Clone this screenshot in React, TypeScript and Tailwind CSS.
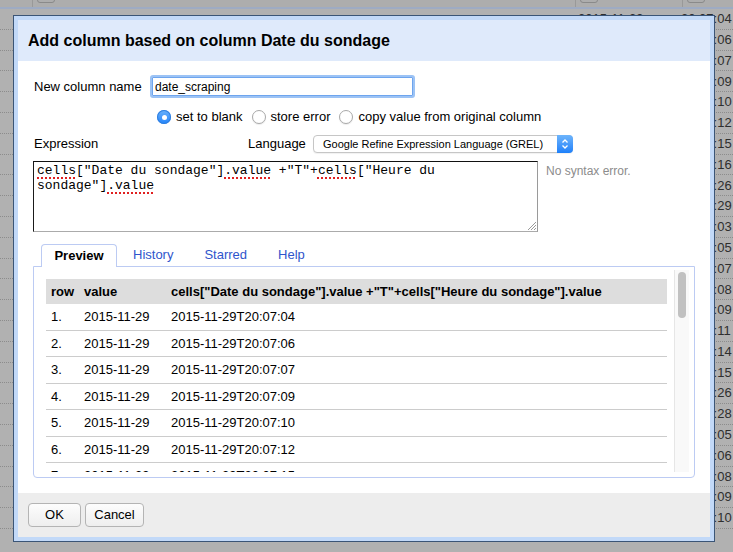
const bgRows = [
  "04", "06", "07", "09", "10", "12", "15", "16", "26", "29", "03", "05", "07",
  "08", "09", "11", "14", "15", "26", "28", "05", "06", "08", "09", "10",
];

const preview = [
  ["1.", "2015-11-29", "2015-11-29T20:07:04"],
  ["2.", "2015-11-29", "2015-11-29T20:07:06"],
  ["3.", "2015-11-29", "2015-11-29T20:07:07"],
  ["4.", "2015-11-29", "2015-11-29T20:07:09"],
  ["5.", "2015-11-29", "2015-11-29T20:07:10"],
  ["6.", "2015-11-29", "2015-11-29T20:07:12"],
  ["7.", "2015-11-29", "2015-11-29T20:07:15"],
];

function Radio({ checked, label }: { checked?: boolean; label: string }) {
  return (
    <label className="flex items-center gap-[5px]">
      {checked ? (
        <span className="flex h-[14px] w-[14px] items-center justify-center rounded-full bg-gradient-to-b from-[#69b1fa] to-[#1f84fb] shadow-[inset_0_0_0_1px_#2f7fe0]">
          <span className="h-[5px] w-[5px] rounded-full bg-white" />
        </span>
      ) : (
        <span className="h-[14px] w-[14px] rounded-full border border-[#a9a9a9] bg-white shadow-[0_1px_1px_rgba(0,0,0,0.08)]" />
      )}
      <span>{label}</span>
    </label>
  );
}

const spell = "underline decoration-dotted decoration-[#e02020] decoration-2 underline-offset-[3px]";

export default function App() {
  return (
    <div className="relative h-[552px] w-[733px] overflow-hidden bg-[#b1b1b1] font-['Liberation_Sans',Arial,sans-serif] text-black">
      {/* grid behind the dialog */}
      <div className="flex h-[9px] border-b-2 border-[#9eabc3] bg-[#adadad]">
        <div className="w-[33px] border-r border-[#999]" />
        <div className="w-[543px] border-r border-[#999] pl-[4px]">
          <div className="mt-[-9px] h-[12px] w-[18px] rounded-[3px] border border-[#8a8a8a]" />
        </div>
        <div className="w-[107px] border-r border-[#999] pl-[4px]">
          <div className="mt-[-9px] h-[12px] w-[18px] rounded-[3px] border border-[#8a8a8a]" />
        </div>
        <div className="flex-1 pl-[4px]">
          <div className="mt-[-9px] h-[12px] w-[18px] rounded-[3px] border border-[#8a8a8a]" />
        </div>
      </div>
      {bgRows.map((s, i) => (
        <div key={i} className="flex h-[20.8px] items-center border-b border-dotted border-[#8c8c8c] text-[13px] text-[#2e2e2e]">
          <div className="w-[578px]" />
          <div className="w-[103px]">{i === 0 ? "2015-11-29" : ""}</div>
          <div className="flex-1">20:07:{s}</div>
        </div>
      ))}

      {/* dialog */}
      <div className="absolute left-[13px] top-[15px] h-[527px] w-[702px] border border-[#3b5576] bg-[#c2d9f8] p-[4px]">
        <div className="flex h-full flex-col bg-white">
          <div className="flex h-[41px] items-center bg-[#dfeafb] pl-[10px] text-[16px] font-bold">
            Add column based on column Date du sondage
          </div>

          <div className="flex flex-1 flex-col px-[15px] text-[13px]">
            <div className="mt-[14px] flex h-[23px] items-center">
              <span className="w-[117px] pl-[1px]">New column name</span>
              <div className="flex h-[23px] w-[265px] items-center rounded-[3px] border-2 border-[#9cc3f5] pl-[3px] text-[12px] shadow-[inset_0_0_0_1px_#6ea5ee]">
                date_scraping
              </div>
            </div>

            <div className="mt-[11px] flex h-[16px] items-center gap-[9px] pl-[124px]">
              <Radio checked label="set to blank" />
              <Radio label="store error" />
              <Radio label="copy value from original column" />
            </div>

            <div className="mt-[10px] flex h-[18px] items-center">
              <span className="w-[215px] pl-[1px]">Expression</span>
              <span className="w-[65px]">Language</span>
              <div className="flex h-[18px] w-[260px] items-center justify-between rounded-[4px] border border-[#c6c6c6] bg-white text-[11px] shadow-[0_1px_1px_rgba(0,0,0,0.06)]">
                <span className="pl-[9px]">Google Refine Expression Language (GREL)</span>
                <span className="flex h-[18px] w-[16px] -mr-px items-center justify-center rounded-r-[4px] bg-gradient-to-b from-[#6db4fb] to-[#1c80fa]">
                  <svg width="8" height="12" viewBox="0 0 8 12" fill="none" stroke="white" strokeWidth="1.3">
                    <path d="M1.5 4.5 L4 2 L6.5 4.5" />
                    <path d="M1.5 7.5 L4 10 L6.5 7.5" />
                  </svg>
                </span>
              </div>
            </div>

            <div className="mt-[8px] flex items-start">
              <div className="relative h-[71px] w-[505px] border border-b-[#ababab] border-l-[#1a1a1a] border-r-[#9a9a9a] border-t-[#111] px-[3px] pt-[1px] font-['Liberation_Mono','Courier_New',monospace] text-[13px] leading-[15px]">
                <div>
                  <span className={spell}>cells</span>["Date du sondage"]<span className={spell}>.value</span> +"T"+<span className={spell}>cells</span>["Heure du
                </div>
                <div>
                  sondage"]<span className={spell}>.value</span>
                </div>
                <svg className="absolute bottom-[1px] right-[1px]" width="9" height="9" viewBox="0 0 9 9" stroke="#9a9a9a" strokeWidth="1">
                  <path d="M1 9 L9 1" />
                  <path d="M4 9 L9 4" />
                  <path d="M7 9 L9 7" />
                </svg>
              </div>
              <span className="ml-[8px] mt-[1px] text-[12px] text-[#8c8c8c]">No syntax error.</span>
            </div>

            <div className="relative z-10 mt-[12px] -mb-px flex h-[23px] items-start pl-[8px]">
              <div className="flex h-[23px] w-[76px] items-center justify-center rounded-t-[4px] border border-b-0 border-[#bccbf3] bg-white font-bold">
                Preview
              </div>
              <div className="flex h-[22px] items-center px-[16px] text-[#2f55cc]">History</div>
              <div className="flex h-[22px] items-center px-[15px] text-[#2f55cc]">Starred</div>
              <div className="flex h-[22px] items-center px-[16px] text-[#2f55cc]">Help</div>
            </div>

            <div className="h-[212px] rounded-b-[4px] border border-[#bccbf3] bg-white">
              <div className="mt-[3px] flex h-[202px] overflow-hidden">
                <div className="flex-1 pl-[12px] pr-[7px] pt-[9px]">
                  <div className="flex h-[25px] items-center bg-[#dddddd] font-bold">
                    <span className="w-[33px] pl-[5px]">row</span>
                    <span className="w-[87px] pl-[5px]">value</span>
                    <span className="flex-1 pl-[5px]">cells["Date du sondage"].value +"T"+cells["Heure du sondage"].value</span>
                  </div>
                  {preview.map((r) => (
                    <div key={r[0]} className="flex h-[26.5px] items-center border-b border-[#cccccc]">
                      <span className="w-[33px] pl-[5px]">{r[0]}</span>
                      <span className="w-[87px] pl-[5px]">{r[1]}</span>
                      <span className="flex-1 pl-[5px]">{r[2]}</span>
                    </div>
                  ))}
                </div>
                <div className="mr-[5px] flex w-[15px] justify-center border-l border-[#e6e6e6] bg-[#f9f9f9] pt-[2px]">
                  <div className="h-[46px] w-[8px] rounded-full bg-[#c1c1c1]" />
                </div>
              </div>
            </div>
          </div>

          <div className="flex h-[44px] gap-[4px] bg-[#ededed] px-[10px] pt-[10px] text-[13px]">
            <button className="h-[24px] w-[53px] rounded-[4px] border border-[#b4b4b4] bg-gradient-to-b from-[#fdfdfd] to-[#eeeeee]">OK</button>
            <button className="h-[24px] w-[59px] rounded-[4px] border border-[#b4b4b4] bg-gradient-to-b from-[#fdfdfd] to-[#eeeeee]">Cancel</button>
          </div>
        </div>
      </div>
    </div>
  );
}
